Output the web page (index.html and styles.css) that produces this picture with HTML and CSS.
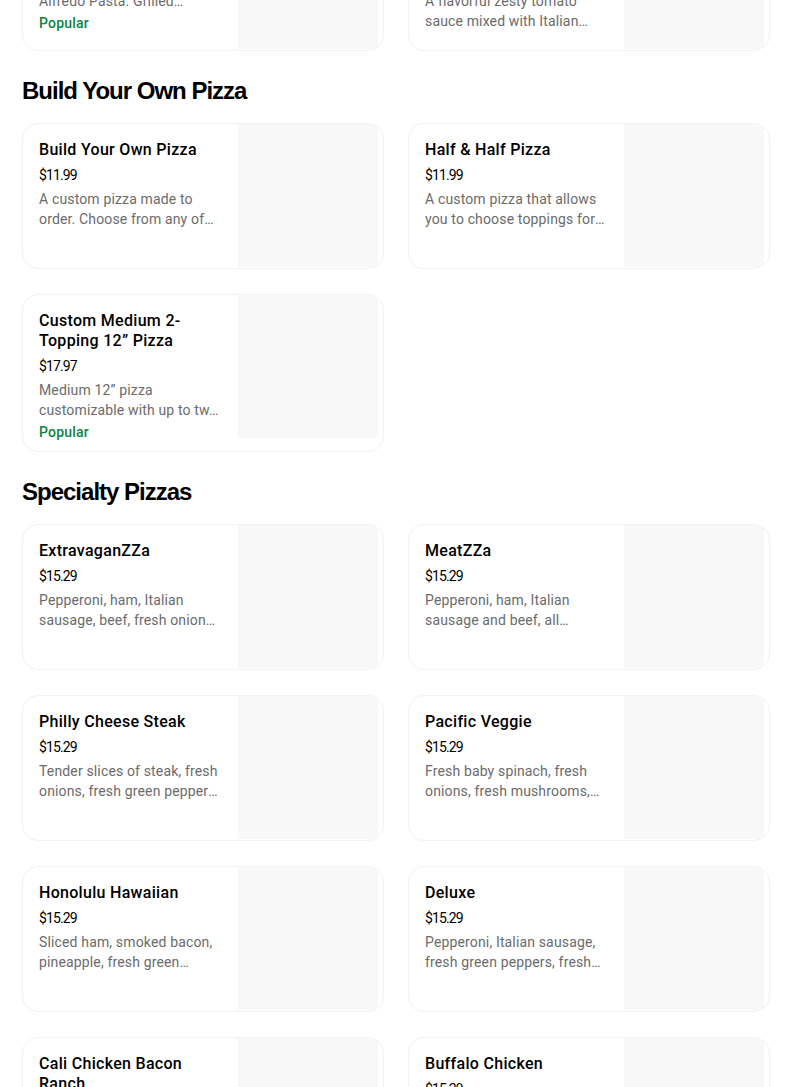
FILE: index.html
```html
<!DOCTYPE html>
<html lang="en">
<head>
<meta charset="utf-8">
<title>Menu</title>
<link rel="stylesheet" href="styles.css">
</head>
<body>
<main class="menu">
  <section class="section section-first">
    <div class="grid">
      <div class="card">
        <div class="info">
          <div class="title">Chicken Alfredo Pasta</div>
          <div class="price">$8.99</div>
          <div class="desc">Try our delicious Chicken Alfredo Pasta. Grilled…</div>
          <div class="tag">Popular</div>
        </div>
        <div class="thumb"></div>
      </div>
      <div class="card">
        <div class="info">
          <div class="title">Italian Sausage Marinara Pasta</div>
          <div class="price">$8.99</div>
          <div class="desc">A flavorful zesty tomato sauce mixed with Italian sausage</div>
        </div>
        <div class="thumb"></div>
      </div>
    </div>
  </section>

  <section class="section">
    <h2 class="heading">Build Your Own Pizza</h2>
    <div class="grid">
      <div class="card">
        <div class="info">
          <div class="title">Build Your Own Pizza</div>
          <div class="price">$11.99</div>
          <div class="desc">A custom pizza made to order. Choose from any of our crusts</div>
        </div>
        <div class="thumb"></div>
      </div>
      <div class="card">
        <div class="info">
          <div class="title">Half &amp; Half Pizza</div>
          <div class="price">$11.99</div>
          <div class="desc">A custom pizza that allows you to choose toppings for each half</div>
        </div>
        <div class="thumb"></div>
      </div>
      <div class="card">
        <div class="info">
          <div class="title">Custom Medium 2-Topping 12” Pizza</div>
          <div class="price">$17.97</div>
          <div class="desc">Medium 12” pizza customizable with up to tw…</div>
          <div class="tag">Popular</div>
        </div>
        <div class="thumb"></div>
      </div>
    </div>
  </section>

  <section class="section">
    <h2 class="heading">Specialty Pizzas</h2>
    <div class="grid">
      <div class="card">
        <div class="info">
          <div class="title">ExtravaganZZa</div>
          <div class="price">$15.29</div>
          <div class="desc">Pepperoni, ham, Italian sausage, beef, fresh onions, fresh green peppers</div>
        </div>
        <div class="thumb"></div>
      </div>
      <div class="card">
        <div class="info">
          <div class="title">MeatZZa</div>
          <div class="price">$15.29</div>
          <div class="desc">Pepperoni, ham, Italian sausage and beef, all sandwiched</div>
        </div>
        <div class="thumb"></div>
      </div>
      <div class="card">
        <div class="info">
          <div class="title">Philly Cheese Steak</div>
          <div class="price">$15.29</div>
          <div class="desc">Tender slices of steak, fresh onions, fresh green peppers, fresh mushrooms</div>
        </div>
        <div class="thumb"></div>
      </div>
      <div class="card">
        <div class="info">
          <div class="title">Pacific Veggie</div>
          <div class="price">$15.29</div>
          <div class="desc">Fresh baby spinach, fresh onions, fresh mushrooms, tomatoes</div>
        </div>
        <div class="thumb"></div>
      </div>
      <div class="card">
        <div class="info">
          <div class="title">Honolulu Hawaiian</div>
          <div class="price">$15.29</div>
          <div class="desc">Sliced ham, smoked bacon, pineapple, fresh green peppers</div>
        </div>
        <div class="thumb"></div>
      </div>
      <div class="card">
        <div class="info">
          <div class="title">Deluxe</div>
          <div class="price">$15.29</div>
          <div class="desc">Pepperoni, Italian sausage, fresh green peppers, fresh mushrooms</div>
        </div>
        <div class="thumb"></div>
      </div>
      <div class="card">
        <div class="info">
          <div class="title">Cali Chicken Bacon Ranch</div>
          <div class="price">$15.29</div>
          <div class="desc">Grilled chicken breast, creamy ranch, smoked bacon, tomatoes</div>
        </div>
        <div class="thumb"></div>
      </div>
      <div class="card">
        <div class="info">
          <div class="title">Buffalo Chicken</div>
          <div class="price">$15.29</div>
          <div class="desc">Grilled chicken breast, hot buffalo sauce, fresh onions</div>
        </div>
        <div class="thumb"></div>
      </div>
    </div>
  </section>
</main>
</body>
</html>
```

FILE: styles.css
```css
* { box-sizing: border-box; }

html, body {
  margin: 0;
  padding: 0;
  background: #ffffff;
  overflow: hidden;
}

body {
  font-family: Roboto, "Liberation Sans", Arial, sans-serif;
  color: #000000;
}

.menu {
  width: 804px;
  padding: 0 34px 0 22px;
  margin-top: -95px;
}

.section {
  display: flex;
  flex-direction: column;
}

.heading {
  margin: 24px 0 16px;
  font-family: "Liberation Sans", Arial, sans-serif;
  font-weight: 700;
  font-size: 24px;
  line-height: 32px;
  letter-spacing: -1px;
  color: #000;
}

.grid {
  display: grid;
  grid-template-columns: 1fr 1fr;
  column-gap: 24px;
  row-gap: 25px;
}

.card {
  display: flex;
  min-height: 146px;
  border: 1px solid #f2f2f2;
  border-radius: 16px;
  overflow: hidden;
  background: #fff;
}

.info {
  flex: 1;
  min-width: 0;
  padding: 16px 16px 9px 16px;
  display: flex;
  flex-direction: column;
}

.thumb {
  flex: 0 0 140px;
  width: 140px;
  height: 143px;
  margin-right: 5px;
  background: #f8f8f8;
}

.title {
  font-size: 16px;
  font-weight: 500;
  line-height: 20px;
  letter-spacing: 0.3px;
  color: #000;
}

.price {
  margin-top: 5px;
  font-size: 14px;
  line-height: 20px;
  color: #000;
  letter-spacing: -0.9px;
}

.desc {
  margin-top: 4px;
  font-size: 14px;
  line-height: 20px;
  letter-spacing: 0.15px;
  color: #6b6b6b;
  display: -webkit-box;
  -webkit-box-orient: vertical;
  -webkit-line-clamp: 2;
  overflow: hidden;
}

.tag {
  margin-top: 2px;
  font-size: 14px;
  font-weight: 500;
  line-height: 20px;
  letter-spacing: 0.2px;
  color: #0e8345;
}
```
